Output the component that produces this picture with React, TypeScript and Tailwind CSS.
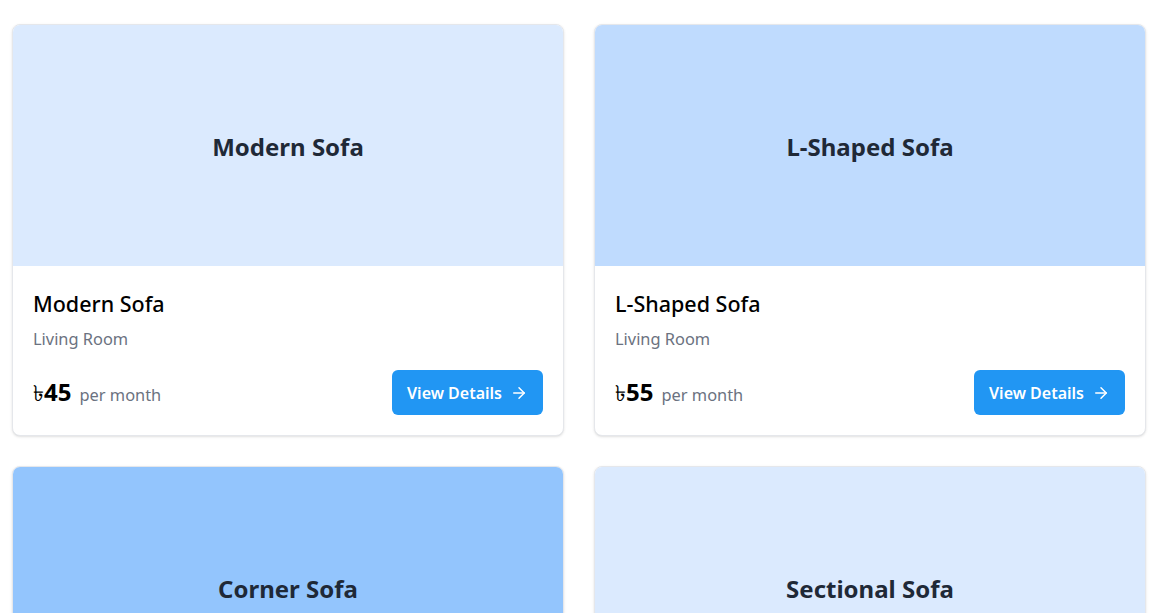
import React from "react";
import { ArrowRight } from "lucide-react";

const items = [
  { name: "Modern Sofa", cat: "Living Room", price: 45, bg: "bg-[#dbeafe]" },
  { name: "L-Shaped Sofa", cat: "Living Room", price: 55, bg: "bg-[#bfdbfe]" },
  { name: "Corner Sofa", cat: "Living Room", price: 60, bg: "bg-[#93c5fd]" },
  { name: "Sectional Sofa", cat: "Living Room", price: 70, bg: "bg-[#dbeafe]" },
];

function Card({ it }: { it: (typeof items)[number] }) {
  return (
    <div className="rounded-lg border border-[#e5e7eb] bg-white shadow-sm overflow-hidden">
      <div className={`${it.bg} h-[241px] flex items-center justify-center pt-[2px]`}>
        <h2 className="text-2xl font-bold text-[#1f2937]">{it.name}</h2>
      </div>
      <div className="px-5 pt-6 pb-5">
        <h3 className="text-[21.5px] leading-7 font-medium text-black">{it.name}</h3>
        <p className="mt-[9px] text-[16.4px] leading-6 text-[#6b7280]">{it.cat}</p>
        <div className="mt-[19px] flex items-center justify-between">
          <div className="flex items-baseline">
            <span className="text-[22px] font-normal text-black">৳</span>
            <span className="text-2xl font-bold text-black">{it.price}</span>
            <span className="ml-2 text-[16.4px] text-[#6b7280]">per month</span>
          </div>
          <button className="flex items-center gap-2 rounded-md bg-[#2196f3] px-[15px] h-[45px] text-base font-semibold text-white">
            View Details
            <ArrowRight size={18} strokeWidth={2} />
          </button>
        </div>
      </div>
    </div>
  );
}

export default function App() {
  return (
    <div
      className="min-h-screen bg-white pl-3 pr-[22px] pt-6 pb-6"
      style={{ fontFamily: '"Noto Sans", "Open Sans", sans-serif' }}
    >
      <div className="grid grid-cols-2 gap-[30px]">
        {items.map((it) => (
          <Card key={it.name} it={it} />
        ))}
      </div>
    </div>
  );
}
